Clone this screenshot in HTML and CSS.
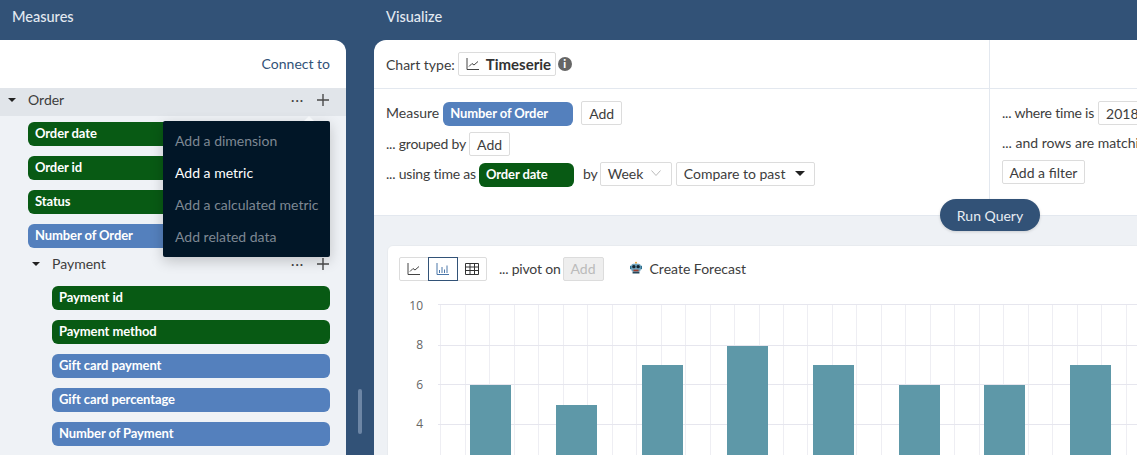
FILE: index.html
```html
<!DOCTYPE html>
<html lang="en">
<head>
  <meta charset="UTF-8">
  <title>Visualize</title>
  <link rel="stylesheet" href="styles.css">
</head>
<body>
  <div class="app">
    <!-- Left column: measures -->
    <div class="measures">
      <div class="col-title">Measures</div>
      <div class="measures-panel">
        <div class="connect-row"><a class="connect">Connect to</a></div>
        <div class="tree">
          <div class="cube-row cube-row-open">
            <span class="caret"></span>
            <span class="cube-name">Order</span>
            <span class="dots">···</span>
            <svg class="plus" viewBox="0 0 12 12"><path d="M6 0V12M0 6H12"/></svg>
          </div>
          <div class="pills">
            <div class="pill pill-dim">Order date</div>
            <div class="pill pill-dim">Order id</div>
            <div class="pill pill-dim">Status</div>
            <div class="pill pill-metric">Number of Order</div>
          </div>
          <div class="nested">
            <div class="cube-row">
              <span class="caret"></span>
              <span class="cube-name">Payment</span>
              <span class="dots">···</span>
              <svg class="plus" viewBox="0 0 12 12"><path d="M6 0V12M0 6H12"/></svg>
            </div>
            <div class="pills">
              <div class="pill pill-dim">Payment id</div>
              <div class="pill pill-dim">Payment method</div>
              <div class="pill pill-metric">Gift card payment</div>
              <div class="pill pill-metric">Gift card percentage</div>
              <div class="pill pill-metric">Number of Payment</div>
            </div>
          </div>
        </div>
        <!-- Add menu -->
        <div class="menu">
          <div class="menu-item">Add a dimension</div>
          <div class="menu-item menu-item-on">Add a metric</div>
          <div class="menu-item">Add a calculated metric</div>
          <div class="menu-item">Add related data</div>
        </div>
      </div>
      <div class="scrollbar"></div>
    </div>

    <!-- Right column: query builder and chart -->
    <div class="visualize">
      <div class="col-title">Visualize</div>
      <div class="visualize-panel">
        <div class="builder">
          <div class="builder-main">
            <div class="type-row">
              <span>Chart type:</span>
              <button class="btn btn-type">
                <svg class="icon" viewBox="0 0 14 14"><path d="M1 1V12.5H13M3 9.5L6 6.5L8 8L12 4.5"/></svg>
                Timeserie
              </button>
              <span class="info">i</span>
            </div>
            <div class="query">
              <div class="query-row">
                <span>Measure</span>
                <div class="pill pill-metric pill-measure">Number of Order</div>
                <button class="btn btn-add-first">Add</button>
              </div>
              <div class="query-row query-row-next">
                <span class="lead">... grouped by</span>
                <button class="btn">Add</button>
              </div>
              <div class="query-row query-row-next">
                <span class="lead">... using time as</span>
                <div class="pill pill-dim pill-time">Order date</div>
                <span class="by">by</span>
                <button class="btn btn-week">Week
                  <svg class="chev" viewBox="0 0 10 6"><path d="M.5 .5L5 5.5L9.5 .5"/></svg>
                </button>
                <button class="btn btn-compare">Compare to past <span class="caret caret-big"></span></button>
              </div>
            </div>
          </div>
          <div class="builder-side">
            <div class="side-top"></div>
            <div class="side-body">
              <div class="query-row">
                <span class="lead">... where time is</span>
                <button class="btn btn-date">2018-01-01 to 2018-12-31</button>
              </div>
              <div class="side-text">... and rows are matching</div>
              <button class="btn btn-filter">Add a filter</button>
            </div>
          </div>
        </div>
        <div class="results">
          <button class="run">Run Query</button>
          <div class="card">
            <div class="card-bar">
              <div class="toggles">
                <div class="toggle">
                  <svg class="icon" viewBox="0 0 14 14"><path d="M1 1V12.5H13M3 9.5L6 6.5L8 8L12 4.5"/></svg>
                </div>
                <div class="toggle toggle-on">
                  <svg class="icon" viewBox="0 0 14 14"><path d="M1 1V12.5H13M3.5 11V8M6 11V5M8.5 11V7.5M11 11V3.5"/></svg>
                </div>
                <div class="toggle">
                  <svg class="icon icon-table" viewBox="0 0 14 12"><path d="M.5 .5H13.5V11.5H.5ZM.5 4H13.5M.5 7.5H13.5M5 .5V11.5M9.5 .5V11.5"/></svg>
                </div>
              </div>
              <span class="pivot lead">... pivot on</span>
              <button class="btn btn-off">Add</button>
              <a class="forecast">
                <svg class="robot" viewBox="0 0 14 14">
                  <circle cx="7" cy="1.4" r="1.2" fill="#e8a33d"/>
                  <rect x="0" y="5" width="14" height="4" fill="#2d6f8e"/>
                  <rect x="1.5" y="2.5" width="11" height="9.5" rx="2.5" fill="#6fa3bd"/>
                  <circle cx="4.5" cy="6" r="2" fill="#14242f"/>
                  <circle cx="9.5" cy="6" r="2" fill="#14242f"/>
                  <rect x="4" y="9.5" width="6" height="2" fill="#a23c2a"/>
                  <rect x="3" y="12" width="8" height="2" fill="#24475a"/>
                </svg>
                Create Forecast
              </a>
            </div>
            <svg class="chart" viewBox="0 0 738 160" width="738" height="160">
              <path class="grid-v" d="M41.5 9V160M66.5 9V160M90.5 9V160M115.5 9V160M139.5 9V160M164.5 9V160M188.5 9V160M213.5 9V160M237.5 9V160M262.5 9V160M286.5 9V160M311.5 9V160M335.5 9V160M360.5 9V160M384.5 9V160M408.5 9V160M433.5 9V160M457.5 9V160M482.5 9V160M506.5 9V160M531.5 9V160M555.5 9V160M580.5 9V160M604.5 9V160M629.5 9V160M653.5 9V160M678.5 9V160M702.5 9V160M727.5 9V160"/>
              <path class="grid-h" d="M39 9.5H738M39 50.5H738M39 89.5H738M39 129.5H738"/>
              <g class="bars">
                <rect x="71" y="90" width="41" height="70"/>
                <rect x="157" y="110" width="41" height="50"/>
                <rect x="243" y="70" width="41" height="90"/>
                <rect x="328" y="51" width="41" height="109"/>
                <rect x="414" y="70" width="41" height="90"/>
                <rect x="500" y="90" width="41" height="70"/>
                <rect x="585" y="90" width="41" height="70"/>
                <rect x="671" y="70" width="41" height="90"/>
              </g>
              <g class="ticks">
                <text x="24" y="15">10</text>
                <text x="24" y="54">8</text>
                <text x="24" y="94">6</text>
                <text x="24" y="133">4</text>
              </g>
            </svg>
          </div>
        </div>
      </div>
    </div>
  </div>
</body>
</html>
```

FILE: styles.css
```css
* {
  box-sizing: border-box;
}
html, body {
  margin: 0;
  height: 100%;
  overflow: hidden;
}
body {
  font-family: Lato, "Open Sans", sans-serif;
  font-size: 14px;
  color: #3d3d3d;
  background: #325277;
}
button {
  font-family: inherit;
}
.app {
  display: flex;
  height: 455px;
}
.col-title {
  height: 40px;
  line-height: 33px;
  font-size: 14.5px;
  color: #e3e9f1;
  font-weight: 500;
}

/* Measures column */
.measures {
  position: relative;
  width: 374px;
  flex: none;
}
.measures .col-title {
  padding-left: 12px;
}
.measures-panel {
  position: relative;
  width: 346px;
  height: 415px;
  background: #fff;
  border-top-right-radius: 12px;
  overflow: hidden;
}
.connect-row {
  height: 48px;
  padding: 0 16px 2px 0;
  display: flex;
  justify-content: flex-end;
  align-items: center;
}
.connect {
  color: #325277;
}
.tree {
  background: #eff2f6;
  height: 367px;
}
.cube-row {
  display: flex;
  align-items: center;
  height: 24px;
  padding-left: 8px;
}
.cube-row-open {
  height: 28px;
  padding-bottom: 4px;
  background: #e1e5ea;
}
.cube-name {
  margin-left: 12px;
  padding-bottom: 2px;
  flex: 1;
}
.caret {
  width: 0;
  height: 0;
  border-left: 4px solid transparent;
  border-right: 4px solid transparent;
  border-top: 4px solid #222;
}
.dots {
  width: 26px;
  font-size: 13px;
  letter-spacing: 1px;
  line-height: 1;
  color: #444;
}
.plus {
  width: 12px;
  height: 12px;
  margin-right: 17px;
  fill: none;
  stroke: #4a4a4a;
  stroke-width: 1.4;
}
.pills {
  display: flex;
  flex-direction: column;
  gap: 10px;
  padding: 6px 16px 0 28px;
}
.pill {
  height: 24px;
  line-height: 23px;
  padding-left: 7px;
  border-radius: 6px;
  color: #fff;
  font-size: 13px;
  font-weight: 700;
  letter-spacing: -0.1px;
}
.pill-dim {
  background: #085a14;
}
.pill-metric {
  background: #5480bd;
}
.nested {
  padding-left: 24px;
  margin-top: 4px;
}
.nested .cube-row {
  padding-left: 8px;
}
.nested .plus {
  margin-right: 17px;
}
.nested .pills {
  padding-top: 10px;
  padding-left: 28px;
}
.menu {
  position: absolute;
  left: 163px;
  top: 81px;
  width: 167px;
  padding: 4px 0;
  background: #011627;
  border-radius: 2px;
  box-shadow: 0 4px 14px rgba(0, 0, 0, 0.2);
}
.menu::before {
  content: "";
  position: absolute;
  right: 16px;
  top: -5px;
  border-left: 5px solid transparent;
  border-right: 5px solid transparent;
  border-bottom: 5px solid #f4f6f8;
}
.menu-item {
  height: 32px;
  line-height: 32px;
  padding-left: 12px;
  color: #7e8893;
}
.menu-item-on {
  color: #fff;
}
.scrollbar {
  position: absolute;
  left: 358px;
  top: 389px;
  width: 4px;
  height: 45px;
  border-radius: 2px;
  background: #6d86a5;
}

/* Visualize column */
.visualize {
  flex: 1;
  min-width: 0;
}
.visualize .col-title {
  padding-left: 12px;
}
.visualize-panel {
  height: 415px;
  background: #fff;
  border-top-left-radius: 12px;
  overflow: hidden;
}
.builder {
  display: flex;
  height: 175px;
}
.builder-main {
  width: 616px;
  flex: none;
  border-right: 1px solid #e3e8ef;
}
.builder-side {
  flex: 1;
  min-width: 0;
  overflow: hidden;
}
.type-row, .side-top {
  height: 49px;
  border-bottom: 1px solid #e3e8ef;
}
.type-row {
  display: flex;
  align-items: center;
  padding: 0 12px;
  gap: 3px;
}
.btn {
  height: 24px;
  padding: 0 7px;
  font-size: 14px;
  color: #3d3d3d;
  background: #fff;
  border: 1px solid #dcdcdc;
  border-radius: 2px;
  white-space: nowrap;
}
.btn-type {
  display: flex;
  align-items: center;
  gap: 6px;
  width: 98px;
  font-size: 15px;
  font-weight: 700;
  color: #333;
}
.icon {
  width: 14px;
  height: 14px;
  fill: none;
  stroke: #444;
  stroke-width: 1;
  flex: none;
}
.info {
  width: 14px;
  height: 14px;
  margin-left: -1px;
  border-radius: 50%;
  background: #666;
  color: #fff;
  font-size: 11px;
  font-weight: 900;
  line-height: 14px;
  text-align: center;
}
.lead {
  letter-spacing: -0.2px;
  white-space: nowrap;
}
.query {
  padding: 12px 12px 0;
}
.query-row {
  display: flex;
  align-items: flex-start;
  gap: 4px;
  line-height: 24px;
}
.query-row-next {
  margin-top: 6px;
  gap: 3px;
}
.pill-measure {
  width: 130px;
  margin-top: 1px;
  margin-left: 0;
}
.pill-time {
  width: 95px;
  margin-top: 1px;
}
.btn-add-first {
  margin-left: 4px;
}
.by {
  margin-left: 6px;
  margin-right: -1px;
}
.btn-week {
  width: 72px;
  display: flex;
  align-items: center;
  justify-content: space-between;
  padding-bottom: 2px;
}
.chev {
  width: 10px;
  height: 6px;
  margin-right: 3px;
  fill: none;
  stroke: #bbb;
}
.btn-compare {
  width: 139px;
  margin-left: 1px;
  display: flex;
  align-items: center;
  justify-content: space-between;
  padding-bottom: 2px;
}
.caret-big {
  border-left-width: 5px;
  border-right-width: 5px;
  border-top-width: 5px;
  margin-right: 2px;
}
.side-body {
  width: 400px;
  padding: 12px 12px 0;
}
.side-text {
  margin-top: 8px;
  line-height: 20px;
  white-space: nowrap;
}
.btn-filter {
  display: block;
  width: 83px;
  margin-top: 7px;
  padding: 0;
}
.results {
  position: relative;
  height: 240px;
  padding: 29px 0 0 13px;
  background: #eef1f5;
  border-top: 1px solid #e3e8ef;
}
.run {
  position: absolute;
  left: 566px;
  top: -17px;
  width: 100px;
  height: 32px;
  border: none;
  border-radius: 16px;
  background: #325277;
  color: #e8edf3;
  font-size: 14px;
  box-shadow: 0 1px 3px rgba(0, 0, 0, 0.15);
}
.card {
  width: 800px;
  height: 230px;
  padding: 11px;
  background: #fff;
  border-radius: 6px;
  border: 1px solid #e8ebef;
}
.card-bar {
  display: flex;
  align-items: center;
  height: 24px;
}
.toggles {
  display: flex;
  height: 24px;
  border: 1px solid #dcdcdc;
  border-radius: 2px;
}
.toggle {
  width: 28px;
  margin-top: -1px;
  margin-bottom: -1px;
  display: flex;
  align-items: center;
  justify-content: center;
}
.toggle-on {
  width: 30px;
  border: 1px solid #325277;
}
.toggle-on .icon {
  stroke: #4a76a8;
}
.icon-table {
  height: 12px;
  stroke: #333;
}
.pivot {
  margin-left: 12px;
  padding-bottom: 2px;
}
.btn-off {
  margin-left: 2px;
  padding-bottom: 2px;
  background: #eee;
  color: #bbb;
}
.forecast {
  display: flex;
  align-items: center;
  gap: 8px;
  margin-left: 26px;
  padding-bottom: 2px;
}
.robot {
  width: 12px;
  height: 13px;
  margin-top: -2px;
}
.chart {
  display: block;
  margin-top: 14px;
}
.grid-v {
  fill: none;
  stroke: #eeeef3;
}
.grid-h {
  fill: none;
  stroke: #e6e6ee;
}
.bars rect {
  fill: #5e98a8;
}
.ticks text {
  font-family: "Open Sans", sans-serif;
  font-size: 12px;
  fill: #666;
  text-anchor: end;
}
```
